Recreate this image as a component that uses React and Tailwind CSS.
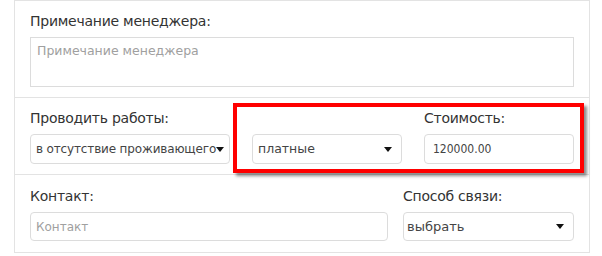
import React from "react";

const font = { fontFamily: '"DejaVu Sans", Verdana, sans-serif' };
const cond = { fontFamily: '"DejaVu Sans Condensed", "DejaVu Sans", sans-serif' };

function Arrow() {
  return (
    <svg width="8" height="5" viewBox="0 0 8 5" className="shrink-0">
      <path d="M0 0 L8 0 L4 5 Z" fill="#111" />
    </svg>
  );
}

function Label({ children }) {
  return <div className="text-[14px] leading-[20px] tracking-[-0.25px] text-[#333] mb-[6px] whitespace-nowrap">{children}</div>;
}

export default function App() {
  return (
    <div className="bg-white w-[602px] h-[256px] overflow-hidden" style={font}>
      <div className="relative ml-[14px] w-[576px] border-l border-r border-t border-[#e3e3e3]">
        <div className="px-[15px] pt-[10px] pb-[10px] border-b border-[#e3e3e3]">
          <Label>Примечание менеджера:</Label>
          <div className="h-[50px] border border-[#dcdcdc] px-[6px] pt-[5px] text-[12.5px] leading-[16px] text-[#a0a0a0] whitespace-nowrap">
            Примечание менеджера
          </div>
        </div>
        <div className="px-[15px] pt-[10px] pb-[10px] border-b border-[#e3e3e3] flex gap-[22px]">
          <div className="w-[200px]">
            <Label>Проводить работы:</Label>
            <div className="h-[30px] border border-[#dcdcdc] rounded-[4px] flex items-center pl-[5px] pr-[6px] text-[12px] tracking-[-0.15px] text-[#444]">
              <span className="whitespace-nowrap">в отсутствие проживающего</span>
              <Arrow />
            </div>
          </div>
          <div className="w-[150px]">
            <Label>&nbsp;</Label>
            <div className="h-[30px] border border-[#dcdcdc] rounded-[4px] flex items-center justify-between pl-[5px] pr-[9px] text-[12.5px] text-[#444]">
              <span>платные</span>
              <Arrow />
            </div>
          </div>
          <div className="w-[150px]">
            <Label>Стоимость:</Label>
            <div className="h-[30px] border border-[#dcdcdc] rounded-[4px] flex items-center pl-[8px] text-[12px] text-[#444]" style={cond}>
              120000.00
            </div>
          </div>
        </div>
        <div className="px-[15px] pt-[11px] pb-[11px] border-b border-[#e3e3e3] flex gap-[15px]">
          <div className="w-[358px]">
            <Label>Контакт:</Label>
            <div className="h-[29px] border border-[#dcdcdc] rounded-[4px] flex items-center pl-[5px] text-[12px] text-[#a0a0a0]">
              Контакт
            </div>
          </div>
          <div className="w-[171px]">
            <Label>Способ связи:</Label>
            <div className="h-[29px] border border-[#dcdcdc] rounded-[4px] flex items-center justify-between pl-[3px] pr-[9px] text-[13px] text-[#444]">
              <span>выбрать</span>
              <Arrow />
            </div>
          </div>
        </div>
        <div className="absolute left-[218px] top-[102px] w-[351px] h-[70px] border-4 border-[#f00] shadow-[3px_3px_3px_rgba(0,0,0,0.45)]" />
      </div>
    </div>
  );
}
